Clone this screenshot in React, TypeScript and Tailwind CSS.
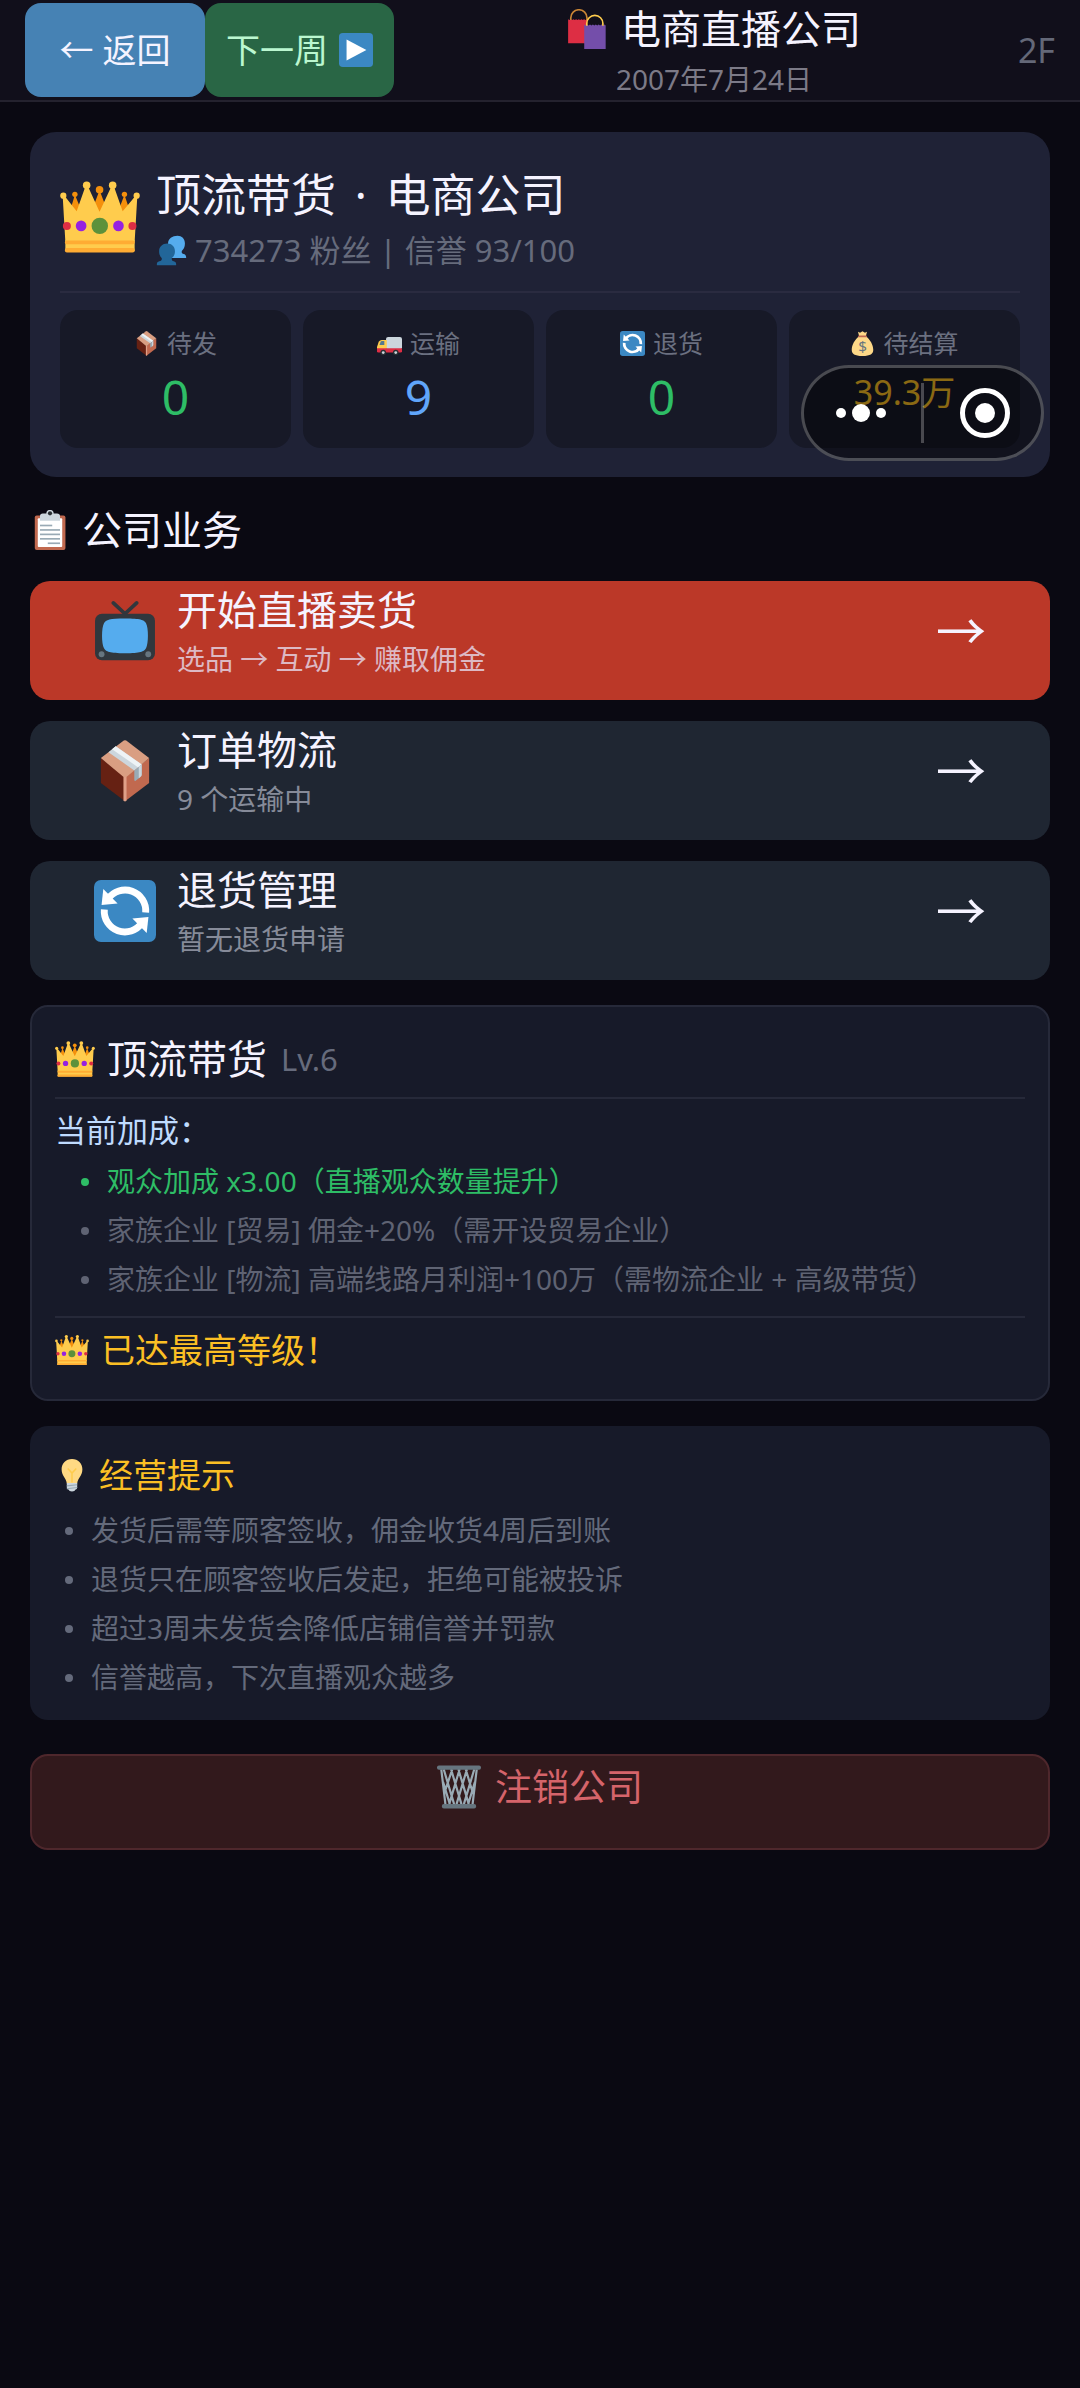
import React, { FC, ReactNode } from 'react';

interface IconProps {
  className?: string;
}

interface StatProps {
  icon: ReactNode;
  label: string;
  value: string;
  valueClass: string;
}

interface ActionProps {
  icon: ReactNode;
  title: string;
  desc: string;
  primary?: boolean;
}

const CrownIcon: FC<IconProps> = ({ className }) => (
  <svg viewBox="0 0 36 36" className={className} aria-hidden="true">
    <g fill="#f4900c">
      <path d="M4 17l2.7-9 3.3 8zM14 16l3.8-10 3.8 10zM26 16l3-8 3 9z" />
      <circle cx="6.7" cy="7.8" r="1.2" />
      <circle cx="17.8" cy="5.7" r="1.7" />
      <circle cx="29" cy="7.8" r="1.2" />
    </g>
    <g fill="#ffcc4d">
      <path d="M2.4 29L1.2 8.4h.8L7.5 15.4 11.5 4h1l5.3 11.6L23.2 4h1l4 11.4L34 8.4h.8L33.6 29z" />
      <circle cx="1.5" cy="8.4" r="1.4" />
      <circle cx="12" cy="3.7" r="1.7" />
      <circle cx="23.7" cy="3.7" r="1.7" />
      <circle cx="34.5" cy="8.4" r="1.4" />
      <rect x="2.4" y="28" width="31.2" height="5.8" rx="0.8" />
    </g>
    <rect x="2.2" y="28.6" width="31.4" height="1.7" rx="0.8" fill="#ffac33" />
    <rect x="2.2" y="32" width="31.4" height="2" rx="0.9" fill="#ffac33" />
    <circle cx="3.1" cy="22" r="1.8" fill="#dd2e44" />
    <circle cx="32.6" cy="22" r="1.8" fill="#dd2e44" />
    <circle cx="9.5" cy="22" r="2.4" fill="#9622e0" />
    <circle cx="26.3" cy="22" r="2.4" fill="#9622e0" />
    <circle cx="17.9" cy="22" r="3.7" fill="#5c913b" />
  </svg>
);

const BagsIcon: FC<IconProps> = ({ className }) => (
  <svg viewBox="0 0 36 36" className={className} aria-hidden="true">
    <path d="M1 9.2l1.2.8 1.2-.8 1.2.8 1.2-.8 1.2.8 1.2-.8 1.2.8 1.2-.8 1.2.8 1.2-.8 1.2.8 1.2-.8 1.2.8 1.6-.8V30.8H1z" fill="#dd2e44" />
    <path d="M15.5 14l1.3.9 1.3-.9 1.3.9 1.3-.9 1.3.9 1.3-.9 1.3.9 1.3-.9 1.3.9 1.3-.9 1.3.9 1.3-.9 1.3.9 1.3-.9 1.1.8V36H15.5z" fill="#744eaa" />
    <path d="M3.4 10V8a7.3 7.3 0 0 1 14.6 0v2" fill="none" stroke="#c98535" strokeWidth="1.5" />
    <path d="M17.8 15v-2a7.2 7.2 0 0 1 14.5 0v2" fill="none" stroke="#ffcc4d" strokeWidth="1.5" />
  </svg>
);

const PlayIcon: FC<IconProps> = ({ className }) => (
  <svg viewBox="0 0 36 36" className={className} aria-hidden="true">
    <rect width="36" height="36" rx="4" fill="#3b88c3" />
    <path d="M8 7l21 11L8 29z" fill="#fff" />
  </svg>
);

const FansIcon: FC<IconProps> = ({ className }) => (
  <svg viewBox="0 0 36 36" className={className} aria-hidden="true">
    <path
      d="M25 1c5 0 8.6 3.5 8.6 9 0 4-1.6 7-3.6 8.5-.5 2 .2 3 2.2 3.5 2 .5 3 2 2.8 4.7H14V10c0-5.500 5-9 11-9z"
      fill="#55acee"
    />
    <path
      d="M13 9.800c5.400 0 9 3.600 9 9 0 3.700-1.600 6.500-3.600 8-.4 2 .2 3.200 2.200 3.700 2.200.6 3 1.900 2.800 4.500H1c-.2-2.600.6-3.900 2.800-4.500 2.500-.5 3.300-1.700 2.800-3.700-1.600-1.500-3-4.300-3-8 0-5.400 4-9 9.400-9z"
      fill="#226699"
    />
  </svg>
);

const PackageIcon: FC<IconProps> = ({ className }) => (
  <svg viewBox="0 0 36 36" className={className} aria-hidden="true">
    <path d="M4 10.5l14 11v14L4 25z" fill="#662113" />
    <path d="M32 10.5l-14 11v14L32 25z" fill="#c1694f" />
    <path d="M4 10.5L17.3.3q.7-.4 1.4 0L32 10.5 19 21.400q-1 .7-2 0z" fill="#d99e82" />
    <path d="M17.100 21.300h1.800v14l-.9.400-.9-.4z" fill="#e0a088" />
    <path d="M8.400 7.100l4.200-3.400L27.700 14.200l-4.300 3.500z" fill="#ccd6dd" />
    <path d="M10.500 5.300l2.100-1.600L27.700 14.200l-2 1.700z" fill="#eef3f6" />
    <path d="M23.400 17.700l4.300-3.500v6q0 .8-.8 1.300l-2.700 2.100q-.8.500-.8-.5z" fill="#99aab5" />
    <path d="M26 15.600l1.700-1.400v6q0 .8-.8 1.300l-.9.700z" fill="#ccd6dd" />
  </svg>
);

const TruckIcon: FC<IconProps> = ({ className }) => (
  <svg viewBox="0 0 36 36" className={className} aria-hidden="true">
    <rect x="13" y="8.6" width="23" height="18" rx="3" fill="#ccd6dd" />
    <path d="M0 27v-4l2.5-7.5Q4 13 7 13h7v14z" fill="#ffcc4d" />
    <path d="M3.5 20l1.8-4.5Q5.8 14.5 7 14.5h3.5V20z" fill="#55788e" />
    <path d="M0 25h36v4q0 2-2 2H2q-2 0-2-2z" fill="#dd2e44" />
    <circle cx="9" cy="31" r="4" fill="#292f33" />
    <circle cx="27" cy="31" r="4" fill="#292f33" />
    <circle cx="9" cy="31" r="2" fill="#ccd6dd" />
    <circle cx="27" cy="31" r="2" fill="#ccd6dd" />
  </svg>
);

const RefreshIcon: FC<IconProps> = ({ className }) => (
  <svg viewBox="0 0 36 36" className={className} aria-hidden="true">
    <rect width="36" height="36" rx="4" fill="#3b88c3" />
    <path d="M8.2 11A12 12 0 0 1 30 18.9" fill="none" stroke="#fff" strokeWidth="4" />
    <path d="M27.8 25A12 12 0 0 1 6 17.1" fill="none" stroke="#fff" strokeWidth="4" />
    <path d="M5.4 5.2l8.3 8.5-9.3.8z" fill="#fff" />
    <path d="M30.600 30.800l-8.300-8.500 9.300-.8z" fill="#fff" />
  </svg>
);

const MoneyBagIcon: FC<IconProps> = ({ className }) => (
  <svg viewBox="0 0 36 36" className={className} aria-hidden="true">
    <path
      d="M11.5 1l3 1.5L18 .5l3.5 2 3-1.5-1.7 6.5C29 12 33.5 20 33.5 27c0 6-4 9-15.5 9S2.500 33 2.500 27c0-7 4.500-15 10.700-19.500z"
      fill="#fdd888"
    />
    <rect x="11.5" y="6.5" width="13" height="2.6" rx="1.3" fill="#bf6952" />
    <text x="18" y="30" textAnchor="middle" fontSize="22" fontFamily="Noto Sans, sans-serif" fill="#67757f">
      $
    </text>
  </svg>
);

const ClipboardIcon: FC<IconProps> = ({ className }) => (
  <svg viewBox="0 0 36 36" className={className} aria-hidden="true">
    <rect x="4.3" y="5" width="27.6" height="31" rx="1.8" fill="#c1694f" />
    <rect x="7" y="7.5" width="22" height="25.8" rx="0.8" fill="#fff" />
    <path d="M9 9.6V5.500Q9 3.200 11.500 3.200h3.200a3.300 3.300 0 0 1 6.600 0h3Q27 3.200 27 5.500v4.100z" fill="#ccd6dd" />
    <circle cx="18" cy="3" r="1.9" fill="#292f33" />
    <g fill="#99aab5">
      <rect x="9" y="13.2" width="11" height="1.5" />
      <rect x="9" y="17.2" width="18" height="1.5" />
      <rect x="9" y="21.2" width="18" height="1.5" />
      <rect x="9" y="25.2" width="18" height="1.5" />
      <rect x="16" y="29.2" width="11" height="1.5" />
    </g>
  </svg>
);

const TvIcon: FC<IconProps> = ({ className }) => (
  <svg viewBox="0 0 36 36" className={className} aria-hidden="true">
    <path d="M11.2 1.7L18 8l6.8-6.3" fill="none" stroke="#31373d" strokeWidth="2.2" strokeLinecap="round" />
    <rect x="0.6" y="8" width="34.8" height="27" rx="4" fill="#31373d" />
    <path
      d="M18 10.8c9 0 11 .8 12.2 2.700 1.500 2.500 1.500 12 0 14.500-1.200 2-3.200 2.900-12.200 2.900S7 30 5.800 28c-1.500-2.500-1.500-12 0-14.500C7 11.600 9 10.800 18 10.800z"
      fill="#55acee"
    />
    <circle cx="4.4" cy="31.5" r="1.7" fill="#66757f" />
    <circle cx="31.5" cy="31.5" r="1.7" fill="#66757f" />
  </svg>
);

const BulbIcon: FC<IconProps> = ({ className }) => (
  <svg viewBox="0 0 36 36" className={className} aria-hidden="true">
    <path d="M18 1C11.500 1 7 5.800 7 12c0 7 4.800 9 5.500 15h11C24.200 21 29 19 29 12 29 5.800 24.500 1 18 1z" fill="#ffd983" />
    <path d="M13.5 11l4.5 5 4.5-5M18 16v10" fill="none" stroke="#ffcc4d" strokeWidth="1.6" />
    <path d="M12.5 26.5h11v5q0 1.500-2 2l-1 1.500q-2.500 1-5 0l-1-1.500q-2-.5-2-2z" fill="#ccd6dd" />
    <path d="M12.5 29.500l11-1.200M12.500 32.500l11-1.200" stroke="#99aab5" strokeWidth="1.2" />
  </svg>
);

const BasketIcon: FC<IconProps> = ({ className }) => (
  <svg viewBox="0 0 36 36" className={className} aria-hidden="true">
    <path
      d="M3.500 3.500L7 33M32.500 3.500L29 33M5.500 3.500L14 32M11.500 3.500L20 32M17.500 3.500L26 32M23.500 3.500l6 20M12.500 3.500L6 23M18.500 3.500L10 32M24.500 3.500L16 32M30.500 3.500L22 32M5 14l5.500 18M31 14l-5.500 18"
      fill="none"
      stroke="#99aab5"
      strokeWidth="1.8"
    />
    <rect x="0" y="0.5" width="36" height="3.4" rx="1.6" fill="#66757f" />
    <rect x="4" y="32" width="28" height="3.5" rx="1.6" fill="#66757f" />
  </svg>
);

const StatCard: FC<StatProps> = ({ icon, label, value, valueClass }) => (
  <div className="flex flex-col items-center rounded-[18px] bg-[#171927] pt-[14px] pb-[17px]">
    <div className="flex items-center gap-2 text-[25px] leading-[39px] text-[#6b7080]">
      {icon}
      <span>{label}</span>
    </div>
    <div className={valueClass}>{value}</div>
  </div>
);

const ActionButton: FC<ActionProps> = ({ icon, title, desc, primary = false }) => (
  <button
    type="button"
    className={`flex w-full rounded-[20px] px-16 pb-5 text-left ${primary ? 'bg-[#bb3828]' : 'bg-[#1f2632]'}`}
  >
    <span className="flex flex-1 items-center gap-[21px]">
      {icon}
      <span className="flex flex-1 flex-col">
        <span className="text-[40px] leading-[58px] text-[#f5f3ff]">{title}</span>
        <span className={`text-[28px] leading-[41px] ${primary ? 'text-[#ddb9c4]' : 'text-[#868b99]'}`}>{desc}</span>
      </span>
      <span className="text-[50px] leading-[58px] text-[#f5f3ff]">→</span>
    </span>
  </button>
);

const bonuses = [
  { text: '观众加成 x3.00（直播观众数量提升）', active: true },
  { text: '家族企业 [贸易] 佣金+20%（需开设贸易企业）', active: false },
  { text: '家族企业 [物流] 高端线路月利润+100万（需物流企业 + 高级带货）', active: false },
];

const tips = [
  '发货后需等顾客签收，佣金收货4周后到账',
  '退货只在顾客签收后发起，拒绝可能被投诉',
  '超过3周未发货会降低店铺信誉并罚款',
  '信誉越高，下次直播观众越多',
];

const App: FC = () => (
  <div
    lang="zh-CN"
    className="relative min-h-screen bg-[#0a0912] font-['Noto_Sans','Noto_Sans_CJK_SC',sans-serif] text-[#f5f3ff]"
  >
    <header className="flex items-center border-b-2 border-[#24222e] bg-[#110f1b] px-[25px]">
      <button type="button" className="h-[94px] w-[180px] rounded-2xl bg-[#4682b4] text-[34px]">
        ← 返回
      </button>
      <button
        type="button"
        className="flex h-[94px] w-[189px] items-center justify-center gap-[11px] rounded-2xl bg-[#296645] text-[34px] text-[#bbf7d0]"
      >
        下一周
        <PlayIcon className="size-[34px]" />
      </button>
      <div className="flex flex-1 flex-col items-center pl-4">
        <h1 className="flex items-center gap-[14px] text-[40px] leading-[58px]">
          <BagsIcon className="size-10" />
          电商直播公司
        </h1>
        <p className="text-[28px] leading-[42px] text-[#7c7a87]">2007年7月24日</p>
      </div>
      <span className="text-[34px] text-[#646878]">2F</span>
    </header>

    <main className="px-[30px] pt-[30px]">
      <section className="rounded-[26px] bg-[#1f2236] px-[30px] pt-[30px] pb-[29px]">
        <div className="flex items-center gap-4 border-b-2 border-[#2a2b40] pb-[19px]">
          <CrownIcon className="size-20" />
          <div>
            <h2 className="text-[45px] leading-[66px]">
              顶流带货 <span className="px-[7px]">·</span> 电商公司
            </h2>
            <p className="flex items-center gap-2 text-[31px] leading-[44px] text-[#666b7c]">
              <FansIcon className="size-[31px]" />
              734273 粉丝 | 信誉 93/100
            </p>
          </div>
        </div>
        <div className="mt-[17px] grid grid-cols-4 gap-3">
          <StatCard
            icon={<PackageIcon className="size-[25px]" />}
            label="待发"
            value="0"
            valueClass="text-[48px] leading-[68px] text-[#2ebd66]"
          />
          <StatCard
            icon={<TruckIcon className="size-[25px]" />}
            label="运输"
            value="9"
            valueClass="text-[48px] leading-[68px] text-[#60a5fa]"
          />
          <StatCard
            icon={<RefreshIcon className="size-[25px]" />}
            label="退货"
            value="0"
            valueClass="text-[48px] leading-[68px] text-[#2ebd66]"
          />
          <StatCard
            icon={<MoneyBagIcon className="size-[25px]" />}
            label="待结算"
            value="39.3万"
            valueClass="text-[34px] leading-[58px] text-[#fbbf24]"
          />
        </div>
      </section>

      <h2 className="mt-[21px] mb-[19px] flex items-center gap-3 text-[40px] leading-[64px]">
        <ClipboardIcon className="size-10" />
        公司业务
      </h2>
      <div className="flex flex-col gap-[21px]">
        <ActionButton icon={<TvIcon className="size-[62px]" />} title="开始直播卖货" desc="选品 → 互动 → 赚取佣金" primary />
        <ActionButton icon={<PackageIcon className="size-[62px]" />} title="订单物流" desc="9 个运输中" />
        <ActionButton icon={<RefreshIcon className="size-[62px]" />} title="退货管理" desc="暂无退货申请" />
      </div>

      <section className="mt-[25px] rounded-[18px] border-2 border-[#262939] bg-[#171a29] px-[23px] pt-5 pb-[23px]">
        <h2 className="flex items-center border-b-2 border-[#262939] pb-[6px] text-[40px] leading-[64px]">
          <CrownIcon className="mr-3 size-10" />
          顶流带货
          <span className="ml-[14px] text-[31px] text-[#666b7c]">Lv.6</span>
        </h2>
        <p className="pt-[6px] text-[31px] leading-[50px] text-[#bfdbfe]">当前加成：</p>
        <ul className="mt-[2px] border-b-2 border-[#262939] pb-3 text-[28px] leading-[49px]">
          {bonuses.map((item) => (
            <li
              key={item.text}
              className={`flex items-center gap-[18px] pl-[26px] ${item.active ? 'text-[#2ebd66]' : 'text-[#5f6373]'}`}
            >
              <span className="size-2 rounded-full bg-current" />
              {item.text}
            </li>
          ))}
        </ul>
        <p className="flex items-center gap-3 pt-[6px] text-[34px] leading-[52px] text-[#fbbf24]">
          <CrownIcon className="size-[34px]" />
          已达最高等级！
        </p>
      </section>

      <section className="mt-[25px] rounded-[18px] bg-[#171a29] px-[25px] pt-6 pb-[18px]">
        <h2 className="flex items-center gap-[10px] text-[34px] leading-[50px] text-[#fbbf24]">
          <BulbIcon className="size-[34px]" />
          经营提示
        </h2>
        <ul className="mt-[6px] text-[28px] leading-[49px] text-[#646a7b]">
          {tips.map((tip) => (
            <li key={tip} className="flex items-center gap-[18px] pl-[10px]">
              <span className="size-2 rounded-full bg-current" />
              {tip}
            </li>
          ))}
        </ul>
      </section>

      <button
        type="button"
        className="mt-[34px] flex w-full items-center justify-center gap-[14px] rounded-[18px] border-2 border-[#4e272c] bg-[#32191c] pb-[30px] text-[37px] leading-[62px] text-[#d5646a]"
      >
        <BasketIcon className="size-11" />
        注销公司
      </button>
    </main>

    {/* floating capsule menu, sits on top of the page */}
    <div className="absolute top-[365px] right-9 flex h-24 w-[243px] items-center rounded-full border-3 border-white/25 bg-black/45">
      <button type="button" aria-label="更多" className="flex flex-1 items-center justify-center gap-[6px] pr-1">
        <span className="size-[10px] rounded-full bg-white" />
        <span className="size-[18px] rounded-full bg-white" />
        <span className="size-[10px] rounded-full bg-white" />
      </button>
      <span className="h-[60px] w-[3px] bg-white/25" />
      <button type="button" aria-label="关闭" className="flex flex-1 items-center justify-center pl-1">
        <span className="flex size-[50px] items-center justify-center rounded-full border-5 border-white">
          <span className="size-5 rounded-full bg-white" />
        </span>
      </button>
    </div>
  </div>
);

export default App;
